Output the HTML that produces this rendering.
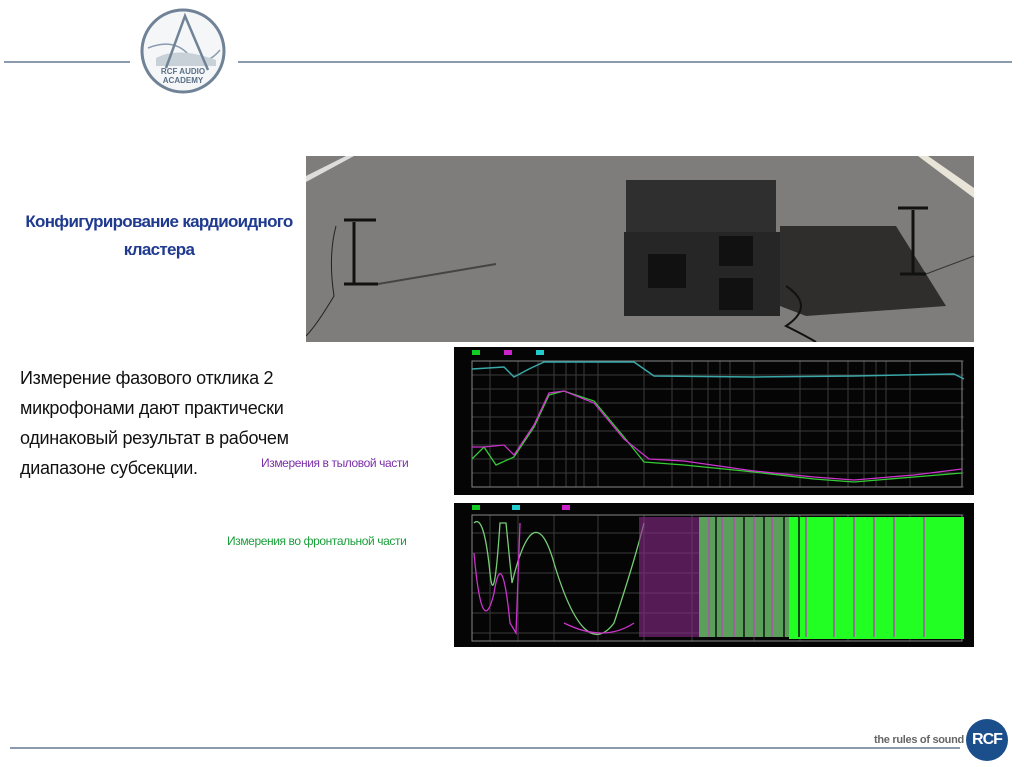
<!DOCTYPE html>
<html><head><meta charset="utf-8"><style>
body{margin:0;width:1024px;height:767px;background:#fff;position:relative;overflow:hidden;font-family:"Liberation Sans",sans-serif}
.a{position:absolute}
</style></head><body>
<div class="a" style="left:4px;top:61px;width:126px;height:2px;background:#8a9bb0"></div>
<div class="a" style="left:238px;top:61px;width:774px;height:2px;background:#8a9bb0"></div>
<svg class="a" style="left:138px;top:8px" width="90" height="86" viewBox="0 0 90 86">
<circle cx="45" cy="43" r="41" fill="#f4f6f8" stroke="#6f8296" stroke-width="3"/>
<path d="M10 40 Q35 30 50 46 T82 42" fill="none" stroke="#8a9bb0" stroke-width="1.5"/>
<path d="M18 50 Q40 38 78 52 L78 58 L18 58Z" fill="#c8d0d8"/>
<path d="M28 60 L47 8 L70 62" fill="none" stroke="#6f8296" stroke-width="2.5"/>
<text x="45" y="66" font-size="8" text-anchor="middle" fill="#5a6f86" font-weight="bold">RCF AUDIO</text>
<text x="45" y="75" font-size="8" text-anchor="middle" fill="#5a6f86" font-weight="bold">ACADEMY</text>
</svg>
<div class="a" style="left:8px;top:208px;width:302px;text-align:center;color:#1f3a8f;font-weight:bold;font-size:17px;line-height:28px;letter-spacing:-0.7px">Конфигурирование кардиоидного<br>кластера</div>
<svg class="a" style="left:306px;top:156px" width="668" height="186">
<rect width="668" height="186" fill="#7f7d7b"/>
<path d="M0 20 L40 0 L48 0 L0 26Z" fill="#ddd"/>
<path d="M612 0 L622 0 L668 32 L668 42Z" fill="#e8e4d8"/>
<path d="M474 70 L590 70 L640 150 L500 160 L474 150Z" fill="#2b2a29" opacity=".95"/>
<rect x="320" y="24" width="150" height="56" fill="#2f2f2f"/>
<rect x="318" y="76" width="156" height="84" fill="#262626"/>
<rect x="342" y="98" width="38" height="34" fill="#111"/>
<rect x="413" y="80" width="34" height="30" fill="#111"/>
<rect x="413" y="122" width="34" height="32" fill="#111"/>
<path d="M48 66 L48 128 M38 128 L72 128 M38 64 L70 64" stroke="#111" stroke-width="3"/>
<path d="M30 70 Q22 100 28 140 Q10 170 0 180" fill="none" stroke="#222"/>
<path d="M72 128 L190 108" stroke="#444" stroke-width="2"/>
<path d="M607 54 L607 118 M594 118 L620 118 M592 52 L622 52" stroke="#111" stroke-width="3"/>
<path d="M620 118 L668 100" stroke="#333"/>
<path d="M480 130 Q510 150 480 170 Q500 180 510 186" fill="none" stroke="#111" stroke-width="2"/>
</svg>
<div class="a" style="left:20px;top:363px;font-size:18px;line-height:30px;color:#111;letter-spacing:-0.3px">Измерение фазового отклика 2<br>микрофонами дают практически<br>одинаковый результат в рабочем<br>диапазоне субсекции.</div>
<div class="a" style="left:261px;top:456px;font-size:12px;color:#7a2fa8;letter-spacing:-0.4px">Измерения в тыловой части</div>
<div class="a" style="left:227px;top:534px;font-size:12px;color:#1a9e3a;letter-spacing:-0.4px">Измерения во фронтальной части</div>
<svg class="a" style="left:454px;top:347px" width="520" height="148">
<rect width="520" height="148" fill="#050505"/>
<g stroke="#3a3a3a" stroke-width="1">
<path d="M18 14H510M18 28H510M18 42H510M18 56H510M18 70H510M18 84H510M18 98H510M18 112H510M18 126H510M18 140H510"/>
<path d="M36 14V140M64 14V140M84 14V140M100 14V140M112 14V140M122 14V140M130 14V140M144 14V140M190 14V140M218 14V140M238 14V140M254 14V140M266 14V140M276 14V140M300 14V140M346 14V140M374 14V140M394 14V140M410 14V140M422 14V140M432 14V140M456 14V140M508 14V140"/>
</g>
<rect x="18" y="14" width="490" height="126" fill="none" stroke="#888"/>
<rect x="18" y="3" width="8" height="5" fill="#1c2"/><rect x="50" y="3" width="8" height="5" fill="#c2c"/><rect x="82" y="3" width="8" height="5" fill="#2cc"/>
<path d="M18 22 L50 20 L60 30 L75 22 L90 15 L180 15 L200 29 L300 30 L400 29 L500 27 L510 32" fill="none" stroke="#3aa8a8" stroke-width="1.5"/>
<path d="M18 112 L30 100 L42 118 L60 110 L80 80 L95 48 L110 44 L140 54 L170 90 L190 115 L230 118 L300 125 L360 132 L400 135 L460 130 L508 126" fill="none" stroke="#3c3" stroke-width="1.3"/>
<path d="M18 100 L30 100 L50 98 L60 108 L80 78 L95 46 L110 44 L140 56 L170 92 L195 112 L230 114 L300 124 L360 130 L400 133 L460 128 L508 122" fill="none" stroke="#c3c" stroke-width="1.3"/>
</svg>
<svg class="a" style="left:454px;top:503px" width="520" height="144">
<rect width="520" height="144" fill="#050505"/>
<g stroke="#3a3a3a"><path d="M18 12H510M18 30H510M18 50H510M18 70H510M18 90H510M18 110H510M18 130H510M36 12V138M64 12V138M100 12V138M144 12V138M190 12V138M238 12V138M300 12V138M346 12V138M394 12V138M456 12V138"/></g>
<rect x="18" y="12" width="490" height="126" fill="none" stroke="#888"/>
<path d="M20 20 Q30 10 36 70 Q40 110 46 20 L52 20 L58 80 Q80 -10 100 60 Q130 160 160 120 Q180 60 190 20" fill="none" stroke="#7c7" stroke-width="1.3"/>
<path d="M20 50 Q28 140 40 90 Q48 40 56 120 L62 130 L66 20 M110 120 Q150 140 180 120" fill="none" stroke="#c3c" stroke-width="1.3"/>
<rect x="185" y="14" width="60" height="120" fill="#8a2a8a" opacity=".6"/>
<rect x="245" y="14" width="90" height="120" fill="#5aa05a"/>
<rect x="335" y="14" width="175" height="122" fill="#2f2"/>
<g stroke="#a5a" stroke-width="2" opacity=".8"><path d="M255 14V134M268 14V134M280 14V134M300 14V134M318 14V134M352 14V134M380 14V134M400 14V134M420 14V134M440 14V134M470 14V134"/></g>
<g stroke="#111" stroke-width="1.5"><path d="M262 14V134M290 14V134M310 14V134M330 14V134M345 14V134"/></g>
<rect x="18" y="2" width="8" height="5" fill="#1c2"/><rect x="58" y="2" width="8" height="5" fill="#2cc"/><rect x="108" y="2" width="8" height="5" fill="#c2c"/>
</svg>
<div class="a" style="left:10px;top:747px;width:950px;height:2px;background:#8a9bb0"></div>
<div class="a" style="left:874px;top:734px;font-size:11px;color:#666;font-weight:bold;letter-spacing:-0.3px">the rules of sound</div>
<div class="a" style="left:966px;top:719px;width:42px;height:42px;border-radius:50%;background:#1b4f8c;color:#fff;font-weight:bold;font-size:16px;line-height:42px;text-align:center;letter-spacing:-1px">RCF</div>
</body></html>
